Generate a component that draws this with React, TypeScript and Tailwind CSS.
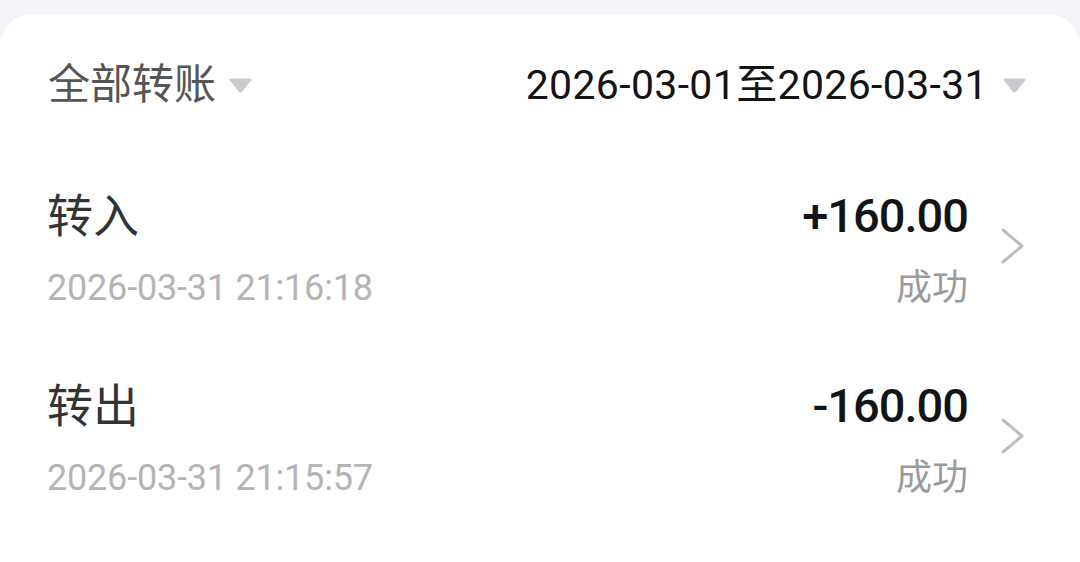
const rows = [
  { title: "转入", time: "2026-03-31 21:16:18", amount: "+160.00", status: "成功" },
  { title: "转出", time: "2026-03-31 21:15:57", amount: "-160.00", status: "成功" },
];

function Caret() {
  return (
    <svg width="25" height="17" viewBox="0 0 25 17" className="shrink-0">
      <path d="M3 1.5 H22 Q24.5 1.5 23 3.6 L14.3 14.6 Q12.5 16.6 10.7 14.6 L2 3.6 Q0.5 1.5 3 1.5 Z" fill="#c9c9ce" />
    </svg>
  );
}

function Chevron() {
  return (
    <svg width="26" height="38" viewBox="0 0 26 38" className="shrink-0">
      <path d="M3 3 L22 19 L3 35" fill="none" stroke="#bcbcbc" strokeWidth="3" strokeLinecap="round" strokeLinejoin="round" />
    </svg>
  );
}

export default function App() {
  return (
    <div
      className="w-[1080px] h-[562px] bg-[#f3f4f7] pt-[14px] overflow-hidden"
      style={{ fontFamily: '"Roboto", "Noto Sans CJK SC", sans-serif' }}
    >
      <div className="bg-white h-full rounded-t-[32px]">
        {/* Filter bar */}
        <div className="h-[146px] flex items-center justify-between pl-[48px] pr-[53px] pb-[4px]">
          <div className="flex items-center gap-[12px]">
            <span className="text-[42px] leading-none text-[#555555]">全部转账</span>
            <Caret />
          </div>
          <div className="flex items-center gap-[14px]">
            <span className="text-[41px] leading-none text-[#141414] tracking-[0.35px]">
              2026-03-01至2026-03-31
            </span>
            <Caret />
          </div>
        </div>

        {/* Records */}
        {rows.map((r) => (
          <div key={r.time} className="h-[190px] flex items-center pl-[47px] pr-[54px] pb-[12px]">
            <div className="flex-1 flex flex-col gap-[22px]">
              <span className="text-[46px] leading-[56px] text-[#333333]">{r.title}</span>
              <span className="text-[36px] leading-[44px] text-[#b4b4b4] tracking-[-0.2px]">{r.time}</span>
            </div>
            <div className="flex flex-col items-end gap-[22px]">
              <span className="text-[47px] leading-[56px] font-medium text-[#141414] tracking-[-1px]">{r.amount}</span>
              <span className="text-[36px] leading-[44px] text-[#9a9a9a]">{r.status}</span>
            </div>
            <div className="ml-[32px] mt-[-6px]">
              <Chevron />
            </div>
          </div>
        ))}
      </div>
    </div>
  );
}
